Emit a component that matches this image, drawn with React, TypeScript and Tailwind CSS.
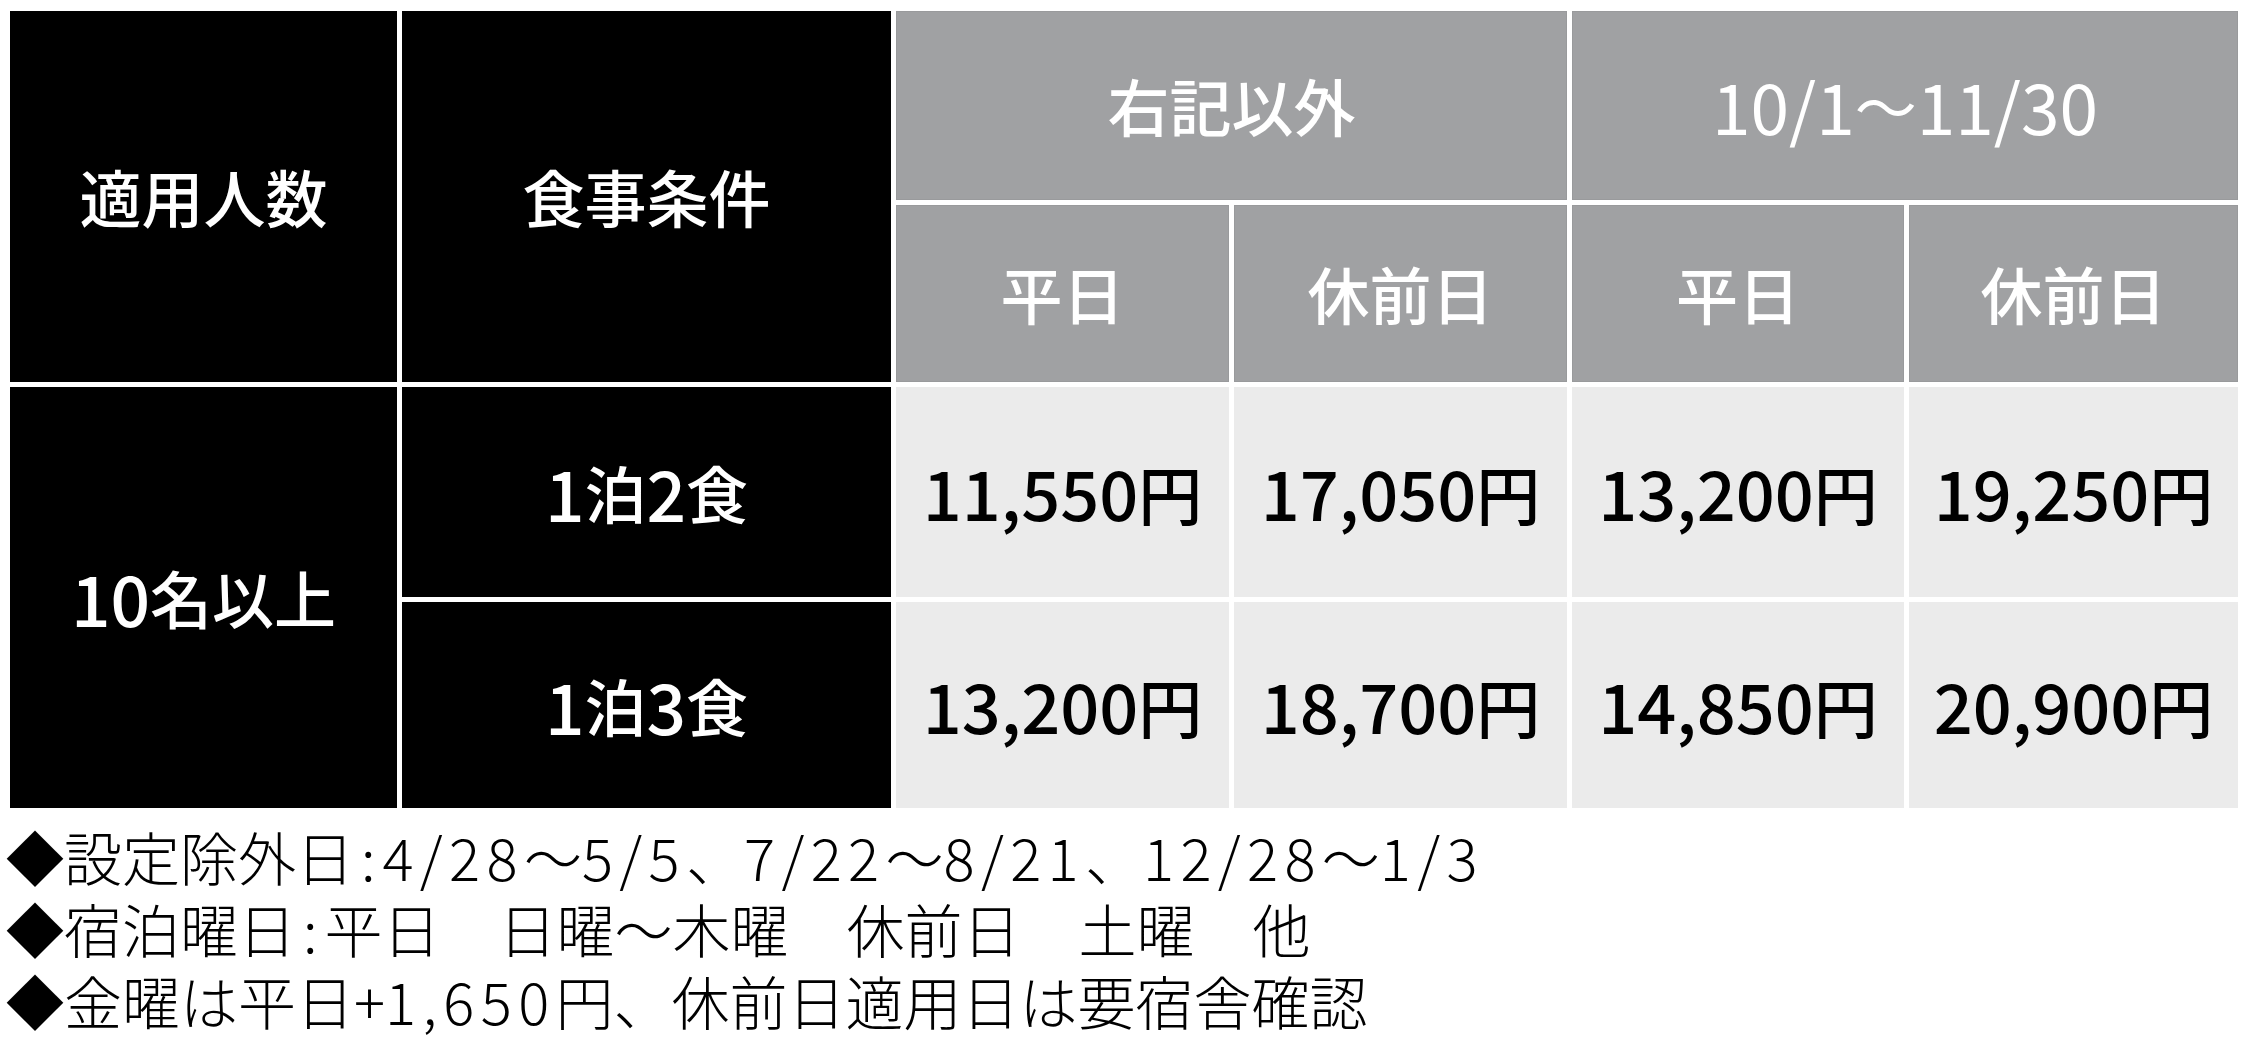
import React from 'react';

const font = "font-['Noto_Sans_CJK_JP','Noto_Sans',sans-serif]";

const rows = [
  { meal: '1泊2食', prices: ['11,550円', '17,050円', '13,200円', '19,250円'] },
  { meal: '1泊3食', prices: ['13,200円', '18,700円', '14,850円', '20,900円'] },
];

const notes = [
  '◆設定除外日：4/28〜5/5、7/22〜8/21、12/28〜1/3',
  '◆宿泊曜日：平日　日曜〜木曜　休前日　土曜　他',
  '◆金曜は平日+1,650円、休前日適用日は要宿舎確認',
];

// the original's digits run a little larger than Noto's
function Txt({ text, num }: { text: string; num: string }) {
  const parts = text.split(/([0-9,/]+|：)/);
  return (
    <>
      {parts.map((p, i) => {
        if (p === '：') {
          return (
            <span key={i} className="inline-block mx-[0.12em]">
              :
            </span>
          );
        }
        if (/^[0-9,/]+$/.test(p)) {
          return (
            <span key={i} className={`inline-block ${num}`}>
              {p}
            </span>
          );
        }
        return <React.Fragment key={i}>{p}</React.Fragment>;
      })}
    </>
  );
}

export default function App() {
  const blackCell = 'flex items-center justify-center bg-black text-white text-[62px] font-medium';
  const grayCell = 'flex items-center justify-center bg-[#a0a1a3] border border-[#999a9c] text-white text-[62px] font-medium';
  const priceCell = 'flex items-center justify-center bg-[#ebebeb] text-black text-[64px] font-medium';

  return (
    <div className={`min-h-screen w-full bg-white ${font}`}>
      <div className="pt-[11px] pl-[10px]">
        <div className="grid grid-cols-[387px_489px_333px_333px_332px_329px] grid-rows-[189px_177px_210px_206px] gap-[5px]">
          <div className={`${blackCell} row-span-2`}>適用人数</div>
          <div className={`${blackCell} row-span-2`}>食事条件</div>
          <div className={`${grayCell} col-span-2`}>右記以外</div>
          <div className={`${grayCell} col-span-2 font-normal`}>
            <Txt text="10/1〜11/30" num="text-[1.12em]" />
          </div>
          <div className={grayCell}>平日</div>
          <div className={grayCell}>休前日</div>
          <div className={grayCell}>平日</div>
          <div className={grayCell}>休前日</div>

          <div className={`${blackCell} row-span-2`}>
            <Txt text="10名以上" num="text-[1.12em]" />
          </div>
          {rows.map((r) => (
            <React.Fragment key={r.meal}>
              <div className={blackCell}>
                <Txt text={r.meal} num="text-[1.12em]" />
              </div>
              {r.prices.map((p, i) => (
                <div key={i} className={priceCell}>
                  <Txt text={p} num="text-[1.07em]" />
                </div>
              ))}
            </React.Fragment>
          ))}
        </div>

        <div className="mt-[12px] -ml-[4px] text-[58px] leading-[72px] font-light text-black">
          {notes.map((n) => (
            <p key={n} className="whitespace-nowrap">
              <Txt text={n} num="tracking-[0.11em]" />
            </p>
          ))}
        </div>
      </div>
    </div>
  );
}
